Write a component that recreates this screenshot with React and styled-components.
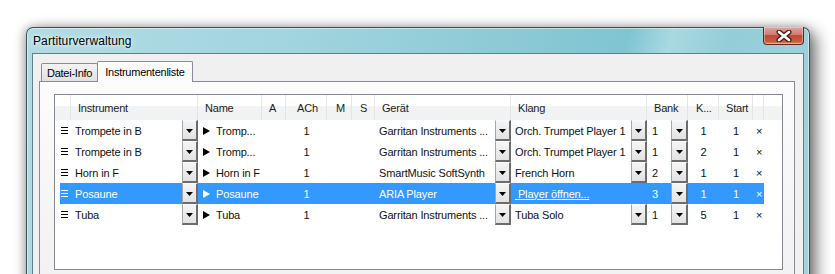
import React from 'react';
import styled, { createGlobalStyle } from 'styled-components';

const GlobalStyle = createGlobalStyle`
  html, body {
    margin: 0;
    padding: 0;
    background: #fff;
    overflow: hidden;
  }
  body {
    font-family: "Liberation Sans", Arial, sans-serif;
  }
`;

// column widths, shared by header and rows (first column differs)
const COLS = '127px 64px 24px 41px 25px 23px 136px 136px 41px 31px 34px 11px';

const Page = styled.div`
  width: 835px;
  height: 274px;
  overflow: hidden;
  box-sizing: border-box;
  padding: 27px 0 0 26px;
`;

const Window = styled.div`
  width: 784px;
  height: 300px;
  box-sizing: border-box;
  border: 1px solid #3d5056;
  border-bottom: none;
  border-radius: 7px 7px 0 0;
  background: linear-gradient(105deg, #b2dce4 0%, #a2d5df 30%, #8dcad6 55%, #80c4d2 70%, #a9d9e1 75%, #93cdd8 82%, #a3d5de 100%);
  box-shadow: 6px 5px 16px rgba(0, 0, 0, 0.55), -2px 0 10px rgba(0, 0, 0, 0.25), inset 0 0 0 1px rgba(255, 255, 255, 0.45);
  display: flex;
  flex-direction: column;
  padding: 0 5px;
`;

const TitleBar = styled.div`
  height: 25px;
  display: flex;
  align-items: center;
  justify-content: space-between;
  margin: 0 -5px;
  padding-left: 6px;
`;

const Title = styled.span`
  font-size: 12px;
  letter-spacing: 0.1px;
  color: #000;
  text-shadow: 0 0 6px rgba(255, 255, 255, 0.9), 0 0 3px rgba(255, 255, 255, 0.8);
`;

const CloseButton = styled.div`
  align-self: flex-start;
  margin-top: -1px;
  margin-right: 5px;
  width: 41px;
  height: 18px;
  box-sizing: border-box;
  border: 1px solid #5a2a22;
  border-top: none;
  border-radius: 0 0 4px 4px;
  background: linear-gradient(#e0a49c 0%, #d27a6e 45%, #c24a36 50%, #c75a40 85%, #de8a6a 100%);
  box-shadow: inset 0 0 0 1px rgba(255, 255, 255, 0.35);
  display: flex;
  align-items: center;
  justify-content: center;
`;

const Client = styled.div`
  flex: 1;
  background: #f0f0f0;
  border: 1px solid #5f8088;
  border-bottom: none;
  padding: 7px 8px 0 6px;
  display: flex;
  flex-direction: column;
`;

const TabStrip = styled.div`
  display: flex;
  align-items: flex-end;
  padding-left: 2px;
`;

const Tab = styled.div`
  box-sizing: border-box;
  height: ${p => (p.$active ? '21px' : '18px')};
  margin-bottom: ${p => (p.$active ? '-1px' : '0')};
  margin-left: ${p => (p.$active ? '-1px' : '0')};
  padding: ${p => (p.$active ? '0 7px 0 7px' : '0 5px 0 5px')};
  border: 1px solid #898c95;
  border-bottom: none;
  border-radius: 2px 2px 0 0;
  background: ${p => (p.$active ? '#fcfcfc' : 'linear-gradient(#f3f3f3, #e1e1e1)')};
  position: relative;
  z-index: ${p => (p.$active ? 1 : 0)};
  font-size: 11px;
  letter-spacing: -0.25px;
  color: #000;
  display: flex;
  align-items: center;
  padding-top: ${p => (p.$active ? '0' : '1px')};
`;

const Panel = styled.div`
  flex: 1;
  border: 1px solid #898c95;
  border-bottom: none;
  background: linear-gradient(#fcfcfc 0%, #f4f4f4 60%, #f0f0f0 100%);
  padding: 12px 11px 0 14px;
`;

const Table = styled.div`
  width: 729px;
  height: 176px;
  box-sizing: border-box;
  border: 1px solid #828790;
  background: #fff;
`;

const Header = styled.div`
  display: grid;
  grid-template-columns: 16px ${COLS} 1fr;
  height: 25px;
  background: linear-gradient(#ffffff 0%, #ffffff 42%, #f2f3f5 45%, #f1f2f4 100%);
`;

const HeadCell = styled.div`
  border-right: 1px solid #e3e4e6;
  font-size: 11px;
  letter-spacing: -0.2px;
  color: #1c1c1c;
  padding-left: ${p => p.$pad ?? 7}px;
  display: flex;
  align-items: center;
  white-space: nowrap;
  overflow: hidden;
  &:last-child {
    border-right: none;
  }
`;

const Row = styled.div`
  display: grid;
  grid-template-columns: 11px ${COLS};
  width: 704px;
  height: 21px;
  margin-left: 5px;
  background: ${p => (p.$selected ? '#3399ff' : 'transparent')};
  color: ${p => (p.$selected ? '#fff' : '#111')};
  font-size: 11px;
  letter-spacing: -0.15px;
`;

const Cell = styled.div`
  display: flex;
  align-items: center;
  justify-content: ${p => (p.$center ? 'center' : 'flex-start')};
  padding-left: ${p => p.$pad || 0}px;
  white-space: nowrap;
  overflow: hidden;
  min-width: 0;
`;

const CellText = styled.span`
  flex: 1;
  overflow: hidden;
`;

const LinkText = styled.span`
  text-decoration: underline;
  color: inherit;
`;

const DropButton = styled.div`
  flex: none;
  width: ${p => p.$w || 16}px;
  height: 21px;
  box-sizing: border-box;
  border-left: 1px solid #a6a6a6;
  border-top: 1px solid #fafafa;
  border-right: 2px solid #6c6c6c;
  border-bottom: 2px solid #6c6c6c;
  background: linear-gradient(#f5f5f5, #e2e2e2);
  display: flex;
  align-items: center;
  justify-content: center;
  padding-top: 1px;
`;

const Arrow = () => (
  <svg width="7" height="4" viewBox="0 0 7 4">
    <polygon points="0,0 7,0 3.5,4" fill="#000" />
  </svg>
);

const Grip = ({ color }) => (
  <svg width="7" height="7" viewBox="0 0 7 7">
    <rect x="0" y="0" width="7" height="1" fill={color} />
    <rect x="0" y="3" width="7" height="1" fill={color} />
    <rect x="0" y="6" width="7" height="1" fill={color} />
  </svg>
);

const Play = ({ color }) => (
  <svg width="7" height="8" viewBox="0 0 7 8" style={{ marginRight: 6, flex: 'none' }}>
    <polygon points="0,0 7,4 0,8" fill={color} />
  </svg>
);

const CloseGlyph = () => (
  <svg width="16" height="12" viewBox="0 0 16 12">
    <path d="M3 2 L13 10 M13 2 L3 10" stroke="#3e1510" strokeWidth="5" strokeLinecap="round" />
    <path d="M3 2 L13 10 M13 2 L3 10" stroke="#fff" strokeWidth="2.8" strokeLinecap="round" />
  </svg>
);

const headers = [
  { label: '', pad: 0 },
  { label: 'Instrument' },
  { label: 'Name' },
  { label: 'A' },
  { label: 'ACh', pad: 11 },
  { label: 'M', pad: 9 },
  { label: 'S', pad: 8 },
  { label: 'Gerät' },
  { label: 'Klang' },
  { label: 'Bank' },
  { label: 'K...', pad: 8 },
  { label: 'Start' },
  { label: '' },
  { label: '' },
];

const rows = [
  { instrument: 'Trompete in B', name: 'Tromp...', ach: '1', device: 'Garritan Instruments ...', sound: 'Orch. Trumpet Player 1', bank: '1', k: '1', start: '1' },
  { instrument: 'Trompete in B', name: 'Tromp...', ach: '1', device: 'Garritan Instruments ...', sound: 'Orch. Trumpet Player 1', bank: '1', k: '2', start: '1' },
  { instrument: 'Horn in F', name: 'Horn in F', ach: '1', device: 'SmartMusic SoftSynth', sound: 'French Horn', bank: '2', k: '1', start: '1' },
  { instrument: 'Posaune', name: 'Posaune', ach: '1', device: 'ARIA Player', link: 'Player öffnen...', bank: '3', k: '1', start: '1', selected: true },
  { instrument: 'Tuba', name: 'Tuba', ach: '1', device: 'Garritan Instruments ...', sound: 'Tuba Solo', bank: '1', k: '5', start: '1' },
];

const InstrumentRow = ({ row }) => {
  const fg = row.selected ? '#fff' : '#000';
  return (
    <Row $selected={row.selected}>
      <Cell $pad={1}><Grip color={fg} /></Cell>
      <Cell $pad={4}>
        <CellText>{row.instrument}</CellText>
        <DropButton><Arrow /></DropButton>
      </Cell>
      <Cell $pad={5}>
        <Play color={fg} />
        <CellText>{row.name}</CellText>
      </Cell>
      <Cell />
      <Cell $center>{row.ach}</Cell>
      <Cell />
      <Cell />
      <Cell $pad={4}>
        <CellText>{row.device}</CellText>
        <DropButton><Arrow /></DropButton>
      </Cell>
      {row.link ? (
        <Cell $pad={4}>
          <LinkText>&nbsp;{row.link}</LinkText>
        </Cell>
      ) : (
        <Cell $pad={4}>
          <CellText>{row.sound}</CellText>
          <DropButton><Arrow /></DropButton>
        </Cell>
      )}
      <Cell $pad={5}>
        <CellText>{row.bank}</CellText>
        <DropButton $w={17}><Arrow /></DropButton>
      </Cell>
      <Cell $center>{row.k}</Cell>
      <Cell $center>{row.start}</Cell>
      <Cell $pad={3}>×</Cell>
    </Row>
  );
};

export default function App() {
  return (
    <Page>
      <GlobalStyle />
      <Window>
        <TitleBar>
          <Title>Partiturverwaltung</Title>
          <CloseButton><CloseGlyph /></CloseButton>
        </TitleBar>
        <Client>
          <TabStrip>
            <Tab>Datei-Info</Tab>
            <Tab $active>Instrumentenliste</Tab>
          </TabStrip>
          <Panel>
            <Table>
              <Header>
                {headers.map((h, i) => (
                  <HeadCell key={i} $pad={h.pad}>{h.label}</HeadCell>
                ))}
              </Header>
              {rows.map((r, i) => (
                <InstrumentRow key={i} row={r} />
              ))}
            </Table>
          </Panel>
        </Client>
      </Window>
    </Page>
  );
}
